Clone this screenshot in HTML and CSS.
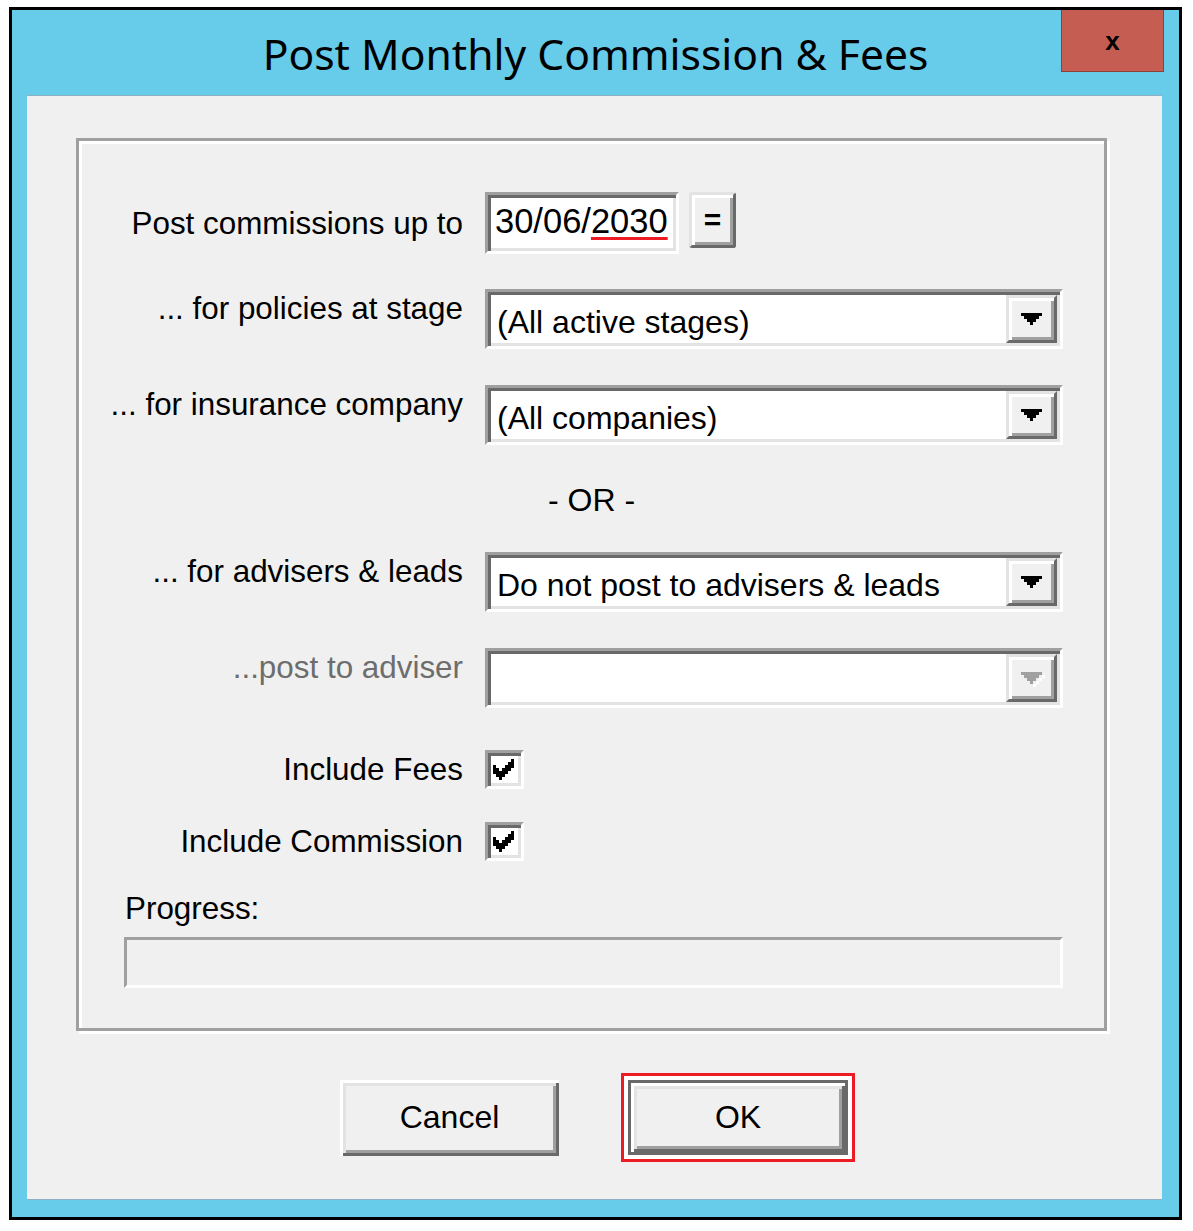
FILE: index.html
```html
<!DOCTYPE html>
<html lang="en">
<head>
    <meta charset="UTF-8">
    <title>Post Monthly Commission &amp; Fees</title>
    <link rel="stylesheet" href="styles.css">
</head>
<body>
    <div class="window">
        <div class="titlebar">
            <h1 class="title">Post Monthly Commission &amp; Fees</h1>
            <button class="close">x</button>
        </div>

        <div class="client">
            <div class="group">
                <div class="row row-date">
                    <label class="label">Post commissions up to</label>
                    <div class="datebox">30/06/<span class="misspelt">2030</span></div>
                    <button class="pick">=</button>
                </div>

                <div class="row row-combo gap-35">
                    <label class="label">... for policies at stage</label>
                    <div class="combo">
                        <span class="combo-text">(All active stages)</span>
                        <span class="drop"><svg width="21" height="12" viewBox="0 0 7 4"><path d="M0 0h7v1h-1v1h-1v1h-1v1h-1v-1h-1v-1h-1v-1h-1z" fill="#000"/></svg></span>
                    </div>
                </div>

                <div class="row row-combo gap-36">
                    <label class="label">... for insurance company</label>
                    <div class="combo">
                        <span class="combo-text">(All companies)</span>
                        <span class="drop"><svg width="21" height="12" viewBox="0 0 7 4"><path d="M0 0h7v1h-1v1h-1v1h-1v1h-1v-1h-1v-1h-1v-1h-1z" fill="#000"/></svg></span>
                    </div>
                </div>

                <div class="or">- OR -</div>

                <div class="row row-combo">
                    <label class="label">... for advisers &amp; leads</label>
                    <div class="combo">
                        <span class="combo-text">Do not post to advisers &amp; leads</span>
                        <span class="drop"><svg width="21" height="12" viewBox="0 0 7 4"><path d="M0 0h7v1h-1v1h-1v1h-1v1h-1v-1h-1v-1h-1v-1h-1z" fill="#000"/></svg></span>
                    </div>
                </div>

                <div class="row row-combo gap-36 disabled">
                    <label class="label">...post to adviser</label>
                    <div class="combo">
                        <span class="combo-text"></span>
                        <span class="drop"><svg width="24" height="15" viewBox="0 0 8 5"><path d="M1 1h7v1h-1v1h-1v1h-1v1h-1v-1h1v-1h1v-1h1v-1z" fill="#fff"/><path d="M0 0h7v1h-1v1h-1v1h-1v1h-1v-1h-1v-1h-1v-1h-1z" fill="#a0a0a0"/></svg></span>
                    </div>
                </div>

                <div class="row row-check gap-42">
                    <label class="label">Include Fees</label>
                    <span class="checkbox"><svg width="21" height="21" viewBox="0 0 7 7"><path d="M6 0h1v1h-1zM5 1h2v1h-2zM0 2h1v1h-1zM4 2h3v1h-3zM0 3h2v1h-2zM3 3h3v1h-3zM0 4h5v1h-5zM1 5h3v1h-3zM2 6h1v1h-1z" fill="#000"/></svg></span>
                </div>

                <div class="row row-check gap-33">
                    <label class="label">Include Commission</label>
                    <span class="checkbox"><svg width="21" height="21" viewBox="0 0 7 7"><path d="M6 0h1v1h-1zM5 1h2v1h-2zM0 2h1v1h-1zM4 2h3v1h-3zM0 3h2v1h-2zM3 3h3v1h-3zM0 4h5v1h-5zM1 5h3v1h-3zM2 6h1v1h-1z" fill="#000"/></svg></span>
                </div>

                <div class="progress-label">Progress:</div>
                <div class="progress"></div>
            </div>

            <div class="actions">
                <button class="btn">Cancel</button>
                <div class="focus"><button class="btn btn-default">OK</button></div>
            </div>
        </div>
    </div>
</body>
</html>
```

FILE: styles.css
```css
body {
    margin: 0;
    background: #ffffff;
    font-family: "Liberation Sans", Arial, sans-serif;
}
.window {
    box-sizing: border-box;
    width: 1173px;
    height: 1213px;
    margin: 7px 0 0 9px;
    border: 3px solid #000;
    background: #67cbea;
    padding: 0 17px 17px 15px;
}
.titlebar {
    position: relative;
    height: 85px;
    margin: 0 -17px 0 -15px;
}
.title {
    margin: 0;
    font-family: "Noto Sans", "Open Sans", sans-serif;
    font-weight: normal;
    font-size: 42.6px;
    line-height: 86px;
    text-align: center;
    color: #000;
}
.close {
    position: absolute;
    top: 0;
    right: 15px;
    width: 103px;
    height: 62px;
    border: 1px solid #8e4038;
    border-top: none;
    background: #c65d52;
    font-family: "Liberation Sans", Arial, sans-serif;
    font-weight: bold;
    font-size: 26px;
    line-height: 58px;
    padding: 0;
    color: #000;
}
.client {
    height: 1105px;
    box-sizing: border-box;
    background: #f0f0f0;
    border-top: 1px solid #8fb0c2;
    border-bottom: 1px solid #8fb0c2;
    padding: 42px 0 0 49px;
}
.group {
    width: 1031px;
    height: 893px;
    box-sizing: border-box;
    border: 3px solid #a0a0a0;
    box-shadow: inset 3px 3px 0 #fff, 3px 3px 0 #fff;
    padding-top: 51px;
    font-size: 32px;
    color: #000;
}
.row {
    display: flex;
    align-items: flex-start;
}
.gap-33 { margin-top: 33px; }
.gap-35 { margin-top: 35px; }
.gap-36 { margin-top: 36px; }
.gap-42 { margin-top: 42px; }
.label {
    flex: none;
    width: 384px;
    margin-right: 22px;
    text-align: right;
    font-size: 31.4px;
    line-height: 40px;
    white-space: nowrap;
}
.row-date .label {
    padding-top: 12px;
}
.row-check {
    align-items: center;
    height: 39px;
}
.disabled .label {
    color: #6d6d6d;
}

/* sunken edit field */
.datebox, .combo, .checkbox {
    box-sizing: border-box;
    background: #fff;
    border-style: solid;
    border-width: 3px;
    border-color: #a0a0a0 #fff #fff #a0a0a0;
    box-shadow: inset 3px 3px 0 #696969, inset -3px -3px 0 #e3e3e3;
}
.datebox {
    width: 194px;
    height: 62px;
    padding: 7px 0 0 7px;
    font-size: 34.5px;
    line-height: 38px;
    white-space: nowrap;
}
.misspelt {
    text-decoration: underline;
    text-decoration-color: #ed1c24;
    text-decoration-thickness: 3px;
    text-underline-offset: 4px;
}
.pick {
    width: 47px;
    height: 56px;
    margin-left: 10px;
    padding: 0;
    border: 3px solid;
    border-color: #e3e3e3 #696969 #696969 #e3e3e3;
    border-radius: 3px;
    background: #f0f0f0;
    box-shadow: inset 3px 3px 0 #fff, inset -3px -3px 0 #a0a0a0;
    font-family: "Liberation Sans", Arial, sans-serif;
    font-weight: bold;
    font-size: 30px;
    color: #000;
}
.combo {
    display: flex;
    align-items: stretch;
    width: 578px;
    height: 60px;
    padding: 3px;
}
.combo-text {
    flex: 1;
    padding-left: 6px;
    line-height: 54px;
    white-space: nowrap;
}
.drop {
    width: 51px;
    display: flex;
    align-items: center;
    justify-content: center;
    box-sizing: border-box;
    border: 3px solid;
    border-color: #e3e3e3 #696969 #696969 #e3e3e3;
    background: #f0f0f0;
    box-shadow: inset 3px 3px 0 #fff, inset -3px -3px 0 #a0a0a0;
}
.disabled .drop svg {
    margin: 3px 0 0 3px;
}
.or {
    height: 107px;
    line-height: 110px;
    text-align: center;
}
.checkbox {
    width: 39px;
    height: 39px;
    padding: 6px 0 0 5px;
    display: block;
}
.checkbox svg {
    display: block;
}
.progress-label {
    margin: 28px 0 0 46px;
    font-size: 31.4px;
    line-height: 40px;
}
.progress {
    box-sizing: border-box;
    width: 939px;
    height: 51px;
    margin: 8px 0 0 45px;
    border-style: solid;
    border-width: 3px;
    border-color: #a0a0a0 #fff #fff #a0a0a0;
    background: #f0f0f0;
}

/* dialog buttons */
.actions {
    display: flex;
    align-items: center;
    justify-content: center;
    gap: 62px;
    margin: 42px 0 0 -43px;
}
.btn {
    box-sizing: border-box;
    width: 219px;
    height: 76px;
    border: none;
    background: #f0f0f0;
    box-shadow: inset 3px 3px 0 #fff, inset -3px -3px 0 #696969, inset 6px 6px 0 #e3e3e3, inset -6px -6px 0 #a0a0a0;
    font-family: "Liberation Sans", Arial, sans-serif;
    font-size: 32px;
    color: #000;
}
.focus {
    border: 3px solid #ed1c24;
    padding: 4px;
    background: #fff;
}
.btn-default {
    display: block;
    width: 220px;
    height: 75px;
    border: 3px solid #696969;
}
```
